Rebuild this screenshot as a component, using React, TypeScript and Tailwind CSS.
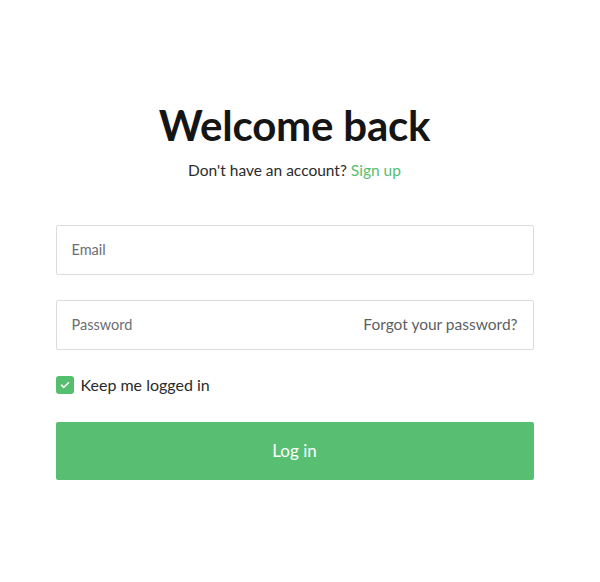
export default function App() {
  return (
    <div
      className="flex min-h-[582px] w-full justify-center bg-white pr-[11px]"
      style={{ fontFamily: "Lato, 'Noto Sans', sans-serif" }}
    >
      <div className="flex w-[478px] flex-col pt-[100px]">
        <h1 className="text-center text-[42px] font-bold leading-[50px] tracking-[-0.2px] text-[#151515]">
          Welcome back
        </h1>
        <p className="mt-[10px] text-center text-[15.5px] leading-5 text-[#2b2b2b]">
          Don't have an account?{" "}
          <a href="#" className="text-[#56be6f]">
            Sign up
          </a>
        </p>

        <div className="mt-[45px] flex h-[50px] items-center rounded-[2px] border border-[#dcdcdc] px-[15px] text-[14.5px] text-[#6b6e73]">
          Email
        </div>

        <div className="mt-[25px] flex h-[50px] items-center justify-between rounded-[2px] border border-[#dcdcdc] px-[15px] text-[14.5px]">
          <span className="text-[#6b6e73]">Password</span>
          <span className="text-[15.5px] text-[#5c5f63]">Forgot your password?</span>
        </div>

        <label className="mt-[23px] flex items-center gap-[7px] text-[16px] text-[#2b2b2b]">
          <span className="flex h-[18px] w-[18px] items-center justify-center rounded-[3px] bg-[#56be6f]">
            <svg width="10" height="8" viewBox="0 0 10 8" fill="none">
              <path d="M1.5 4.2 3.8 6.3 8.5 1.7" stroke="white" strokeWidth="1.6" strokeLinecap="round" strokeLinejoin="round" />
            </svg>
          </span>
          Keep me logged in
        </label>

        <button className="mt-[25px] flex h-[58px] w-full items-center justify-center rounded-[2px] bg-[#58be72] text-[17px] text-white">
          Log in
        </button>
      </div>
    </div>
  );
}
